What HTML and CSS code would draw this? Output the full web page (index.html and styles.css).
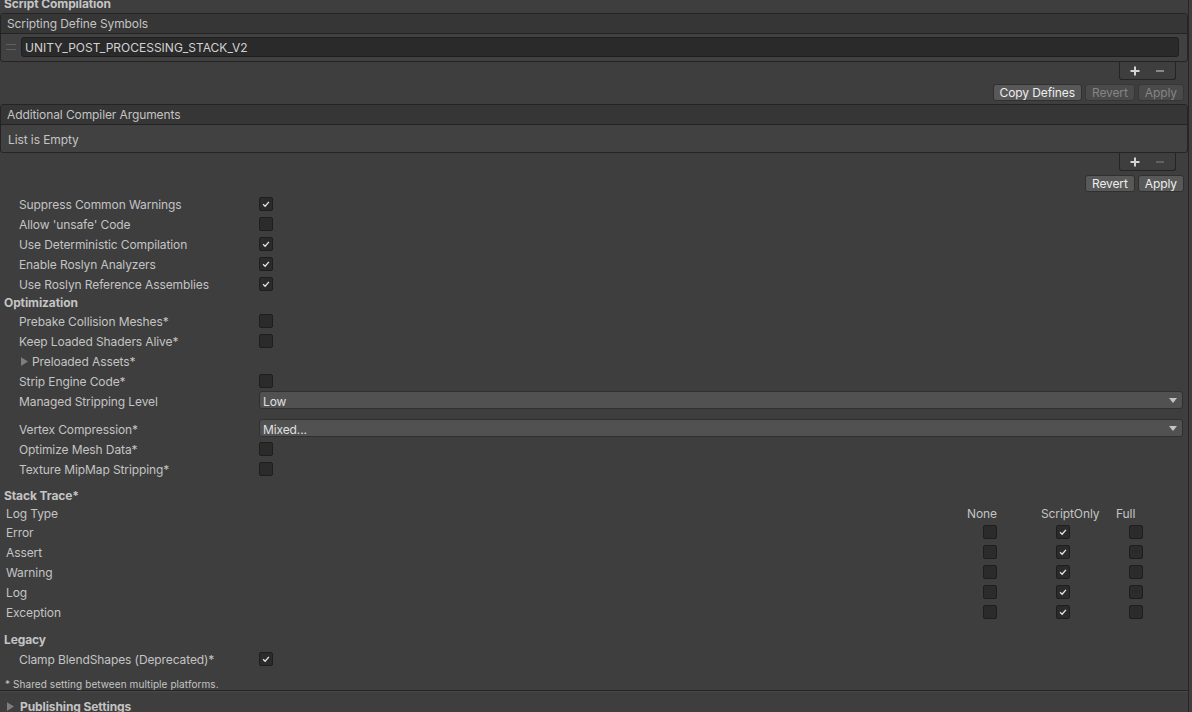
FILE: index.html
```html
<!DOCTYPE html>
<html lang="en">
<head>
  <meta charset="UTF-8">
  <meta name="viewport" content="width=device-width, initial-scale=1.0">
  <title>Player Settings - Other Settings</title>
  <link rel="stylesheet" href="styles.css">
</head>
<body>
  <div class="inspector">
    <div class="section-title first">Script Compilation</div>

    <!-- Scripting Define Symbols -->
    <div class="list">
      <div class="list-header">Scripting Define Symbols</div>
      <div class="list-body">
        <div class="list-item">
          <span class="handle"></span>
          <div class="text-field">UNITY_POST_PROCESSING_STACK_V2</div>
        </div>
      </div>
    </div>
    <div class="list-footer-row">
      <div class="list-footer">
        <svg class="plus" viewBox="0 0 10 10"><path d="M5 0.5v9M0.5 5h9"/></svg>
        <svg class="minus" viewBox="0 0 8 10"><path d="M0 5h8"/></svg>
      </div>
    </div>
    <div class="button-bar">
      <button class="btn">Copy Defines</button>
      <button class="btn disabled">Revert</button>
      <button class="btn disabled">Apply</button>
    </div>

    <!-- Additional Compiler Arguments -->
    <div class="list second">
      <div class="list-header">Additional Compiler Arguments</div>
      <div class="list-body empty">List is Empty</div>
    </div>
    <div class="list-footer-row">
      <div class="list-footer">
        <svg class="plus" viewBox="0 0 10 10"><path d="M5 0.5v9M0.5 5h9"/></svg>
        <svg class="minus off" viewBox="0 0 8 10"><path d="M0 5h8"/></svg>
      </div>
    </div>
    <div class="button-bar">
      <button class="btn">Revert</button>
      <button class="btn">Apply</button>
    </div>

    <div class="fields">
      <div class="field"><span class="label">Suppress Common Warnings</span><span class="toggle on"><svg viewBox="0 0 14 14"><path d="M3.6 7.4 6 9.6 10.4 4.6"/></svg></span></div>
      <div class="field"><span class="label">Allow 'unsafe' Code</span><span class="toggle"></span></div>
      <div class="field"><span class="label">Use Deterministic Compilation</span><span class="toggle on"><svg viewBox="0 0 14 14"><path d="M3.6 7.4 6 9.6 10.4 4.6"/></svg></span></div>
      <div class="field"><span class="label">Enable Roslyn Analyzers</span><span class="toggle on"><svg viewBox="0 0 14 14"><path d="M3.6 7.4 6 9.6 10.4 4.6"/></svg></span></div>
      <div class="field"><span class="label">Use Roslyn Reference Assemblies</span><span class="toggle on"><svg viewBox="0 0 14 14"><path d="M3.6 7.4 6 9.6 10.4 4.6"/></svg></span></div>
    </div>

    <div class="section-title">Optimization</div>
    <div class="fields">
      <div class="field"><span class="label">Prebake Collision Meshes*</span><span class="toggle"></span></div>
      <div class="field"><span class="label">Keep Loaded Shaders Alive*</span><span class="toggle"></span></div>
      <div class="field"><span class="label foldout"><svg class="fold-arrow" viewBox="0 0 8 10"><path d="M0 0 8 5 0 10z"/></svg>Preloaded Assets*</span></div>
      <div class="field"><span class="label">Strip Engine Code*</span><span class="toggle"></span></div>
      <div class="field spaced"><span class="label">Managed Stripping Level</span>
        <div class="popup"><span>Low</span><svg class="popup-arrow" viewBox="0 0 8 5"><path d="M0 0h8L4 5z"/></svg></div>
      </div>
      <div class="field"><span class="label">Vertex Compression*</span>
        <div class="popup"><span>Mixed...</span><svg class="popup-arrow" viewBox="0 0 8 5"><path d="M0 0h8L4 5z"/></svg></div>
      </div>
      <div class="field"><span class="label">Optimize Mesh Data*</span><span class="toggle"></span></div>
      <div class="field"><span class="label">Texture MipMap Stripping*</span><span class="toggle"></span></div>
    </div>

    <div class="section-title trace-title">Stack Trace*</div>
    <div class="trace">
      <div class="trace-row head">
        <span class="label">Log Type</span>
        <span class="label c-none">None</span>
        <span class="label c-script">ScriptOnly</span>
        <span class="label c-full">Full</span>
      </div>
      <div class="trace-row"><span class="label">Error</span><span class="toggle c-none"></span><span class="toggle on c-script"><svg viewBox="0 0 14 14"><path d="M3.6 7.4 6 9.6 10.4 4.6"/></svg></span><span class="toggle c-full"></span></div>
      <div class="trace-row"><span class="label">Assert</span><span class="toggle c-none"></span><span class="toggle on c-script"><svg viewBox="0 0 14 14"><path d="M3.6 7.4 6 9.6 10.4 4.6"/></svg></span><span class="toggle c-full"></span></div>
      <div class="trace-row"><span class="label">Warning</span><span class="toggle c-none"></span><span class="toggle on c-script"><svg viewBox="0 0 14 14"><path d="M3.6 7.4 6 9.6 10.4 4.6"/></svg></span><span class="toggle c-full"></span></div>
      <div class="trace-row"><span class="label">Log</span><span class="toggle c-none"></span><span class="toggle on c-script"><svg viewBox="0 0 14 14"><path d="M3.6 7.4 6 9.6 10.4 4.6"/></svg></span><span class="toggle c-full"></span></div>
      <div class="trace-row"><span class="label">Exception</span><span class="toggle c-none"></span><span class="toggle on c-script"><svg viewBox="0 0 14 14"><path d="M3.6 7.4 6 9.6 10.4 4.6"/></svg></span><span class="toggle c-full"></span></div>
    </div>

    <div class="section-title legacy-title">Legacy</div>
    <div class="fields">
      <div class="field"><span class="label">Clamp BlendShapes (Deprecated)*</span><span class="toggle on"><svg viewBox="0 0 14 14"><path d="M3.6 7.4 6 9.6 10.4 4.6"/></svg></span></div>
    </div>

    <div class="footnote">* Shared setting between multiple platforms.</div>

    <div class="foldout-header">
      <svg class="fold-arrow big" viewBox="0 0 8 10"><path d="M0 0 8 5 0 10z"/></svg>
      <span>Publishing Settings</span>
    </div>
  </div>
</body>
</html>
```

FILE: styles.css
```css
body {
  margin: 0;
  background-color: #3e3e3e;
  color: #c4c4c4;
  font-family: Inter, "Liberation Sans", Arial, sans-serif;
  font-size: 12px;
  letter-spacing: -0.1px;
  overflow: hidden;
}
.inspector {
  display: flex;
  flex-direction: column;
  width: 1188px;
  height: 712px;
  border-right: 1px solid #262626;
}
.section-title {
  flex: none;
  height: 12px;
  line-height: 14px;
  padding: 2px 0 0 4px;
  font-weight: bold;
  margin-bottom: 3px;
}
.section-title.first {
  margin-top: -3px;
  margin-bottom: 2px;
  padding-top: 0;
  height: 14px;
}
.trace-title {
  margin-top: 8px;
  margin-bottom: 2px;
}
.legacy-title {
  margin-top: 9px;
  margin-bottom: 4px;
}

/* reorderable list */
.list {
  flex: none;
  border: 1px solid #242424;
  border-radius: 3px;
  background-color: #414141;
  overflow: hidden;
}
.list.second {
  margin-top: 1px;
}
.list-header {
  height: 19px;
  line-height: 19px;
  padding-left: 6px;
  background-color: #363636;
  border-bottom: 1px solid #242424;
}
.list-body {
  padding: 3px 8px 4px 5px;
}
.list-body.empty {
  height: 25px;
  line-height: 26px;
  padding: 2px 0 0 7px;
}
.list-item {
  display: flex;
  align-items: center;
}
.handle {
  width: 10px;
  height: 4px;
  border-top: 1px solid #5f5f5f;
  border-bottom: 1px solid #5f5f5f;
  margin-right: 5px;
}
.text-field {
  flex: 1;
  height: 17px;
  line-height: 18px;
  padding: 1px 0 0 3px;
  background-color: #2a2a2a;
  border: 1px solid #1f1f1f;
  border-radius: 3px;
  color: #d2d2d2;
  letter-spacing: 0;
}
.list-footer-row {
  display: flex;
  justify-content: flex-end;
  padding-right: 12px;
}
.list-footer {
  display: flex;
  align-items: center;
  gap: 16px;
  height: 17px;
  padding: 0 11px 0 10px;
  border: 1px solid #242424;
  border-top: none;
  border-radius: 0 0 3px 3px;
}
.plus {
  width: 10px;
  height: 10px;
  stroke: #d4d4d4;
  stroke-width: 2;
}
.minus {
  width: 8px;
  height: 10px;
  stroke: #9c9c9c;
  stroke-width: 1.6;
}
.minus.off {
  stroke: #6a6a6a;
}

/* buttons */
.button-bar {
  display: flex;
  justify-content: flex-end;
  gap: 3px;
  padding-right: 4px;
  margin: 4px 0 2px;
}
.btn {
  height: 17px;
  padding: 0 6px;
  font-family: inherit;
  font-size: 12px;
  letter-spacing: -0.1px;
  color: #eeeeee;
  background-color: #585858;
  border: 1px solid #303030;
  border-radius: 3px;
}
.btn.disabled {
  color: #858585;
  background-color: #4a4a4a;
  border-color: #363636;
}

/* property rows */
.field {
  display: grid;
  grid-template-columns: 240px 1fr;
  align-items: center;
  height: 18px;
  margin-bottom: 2px;
  padding: 0 5px 0 19px;
}
.field.spaced {
  margin-bottom: 10px;
}
.label {
  white-space: nowrap;
  padding-top: 2px;
}
.label.foldout {
  display: flex;
  align-items: center;
}
.fold-arrow {
  width: 7px;
  height: 9px;
  fill: #7e7e7e;
  margin: 0 4px 0 2px;
}
.toggle {
  display: block;
  width: 12px;
  height: 12px;
  margin-top: 2px;
  background-color: #2b2b2b;
  border: 1px solid #1e1e1e;
  border-radius: 2px;
}
.toggle svg {
  display: block;
  width: 12px;
  height: 12px;
  fill: none;
  stroke: #e6e6e6;
  stroke-width: 1.5;
}
.popup {
  display: flex;
  align-items: center;
  justify-content: space-between;
  height: 16px;
  padding: 0 5px 0 3px;
  background-color: #515151;
  border: 1px solid #303030;
  border-radius: 3px;
  color: #e0e0e0;
}
.popup span {
  padding-top: 2px;
}
.popup-arrow {
  width: 8px;
  height: 5px;
  fill: #c4c4c4;
}

/* stack trace table */
.trace-row {
  display: grid;
  grid-template-columns: 1fr 50px 100px 78px;
  align-items: center;
  height: 18px;
  margin-bottom: 2px;
  padding-left: 6px;
}
.trace-row.head {
  margin-bottom: 1px;
}
.head .c-none {
  text-align: right;
  padding-right: 13px;
}
.head .c-script {
  padding-left: 31px;
}
.head .c-full {
  padding-left: 6px;
}
.toggle.c-none {
  justify-self: end;
  margin-right: 13px;
}
.toggle.c-script {
  margin-left: 46px;
}
.toggle.c-full {
  margin-left: 19px;
}

.footnote {
  height: 11px;
  line-height: 12px;
  margin-top: 8px;
  padding: 1px 0 0 5px;
  font-size: 10px;
  letter-spacing: 0.08px;
}
.foldout-header {
  display: flex;
  align-items: center;
  margin-top: 1px;
  padding: 8px 0 0 7px;
  height: 18px;
  border-top: 1px solid #252525;
  box-shadow: inset 0 1px #474747;
  font-weight: bold;
}
.fold-arrow.big {
  margin: 0 6px 0 0;
}
```
